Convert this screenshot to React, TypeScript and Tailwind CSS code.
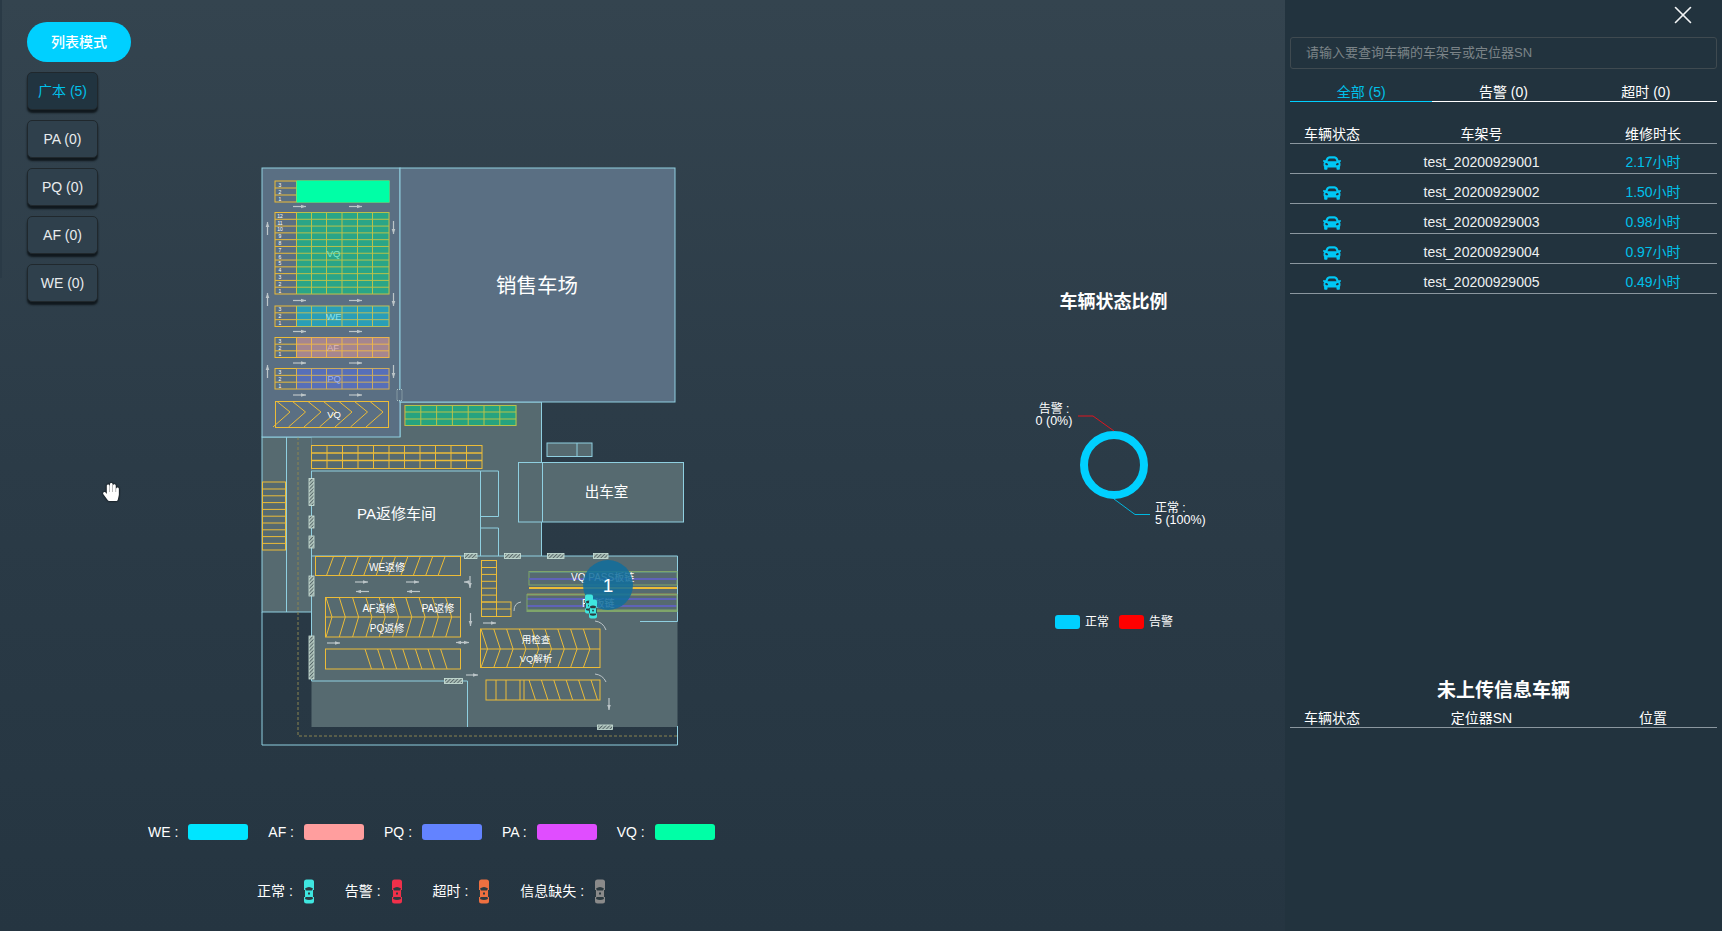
import { X } from "lucide-react";
import { FaCar, FaHandPaper } from "react-icons/fa";

const YELLOW = "#ecbc38";
const LINE = "#8fcfe0";
const GROUND = "#566a70";
const LOT = "#5a6f83";

const modeButtons = [
    { label: "广本 (5)", active: true },
    { label: "PA (0)" },
    { label: "PQ (0)" },
    { label: "AF (0)" },
    { label: "WE (0)" },
];

const vehicles = [
    { sn: "test_20200929001", hours: "2.17小时" },
    { sn: "test_20200929002", hours: "1.50小时" },
    { sn: "test_20200929003", hours: "0.98小时" },
    { sn: "test_20200929004", hours: "0.97小时" },
    { sn: "test_20200929005", hours: "0.49小时" },
];

const typeLegend = [
    { label: "WE :", color: "bg-[#00e5ff]" },
    { label: "AF :", color: "bg-[#ff9e9e]" },
    { label: "PQ :", color: "bg-[#6383ff]" },
    { label: "PA :", color: "bg-[#e04dff]" },
    { label: "VQ :", color: "bg-[#00ffa6]" },
];

const carLegend = [
    { label: "正常 :", color: "#3fe6e0" },
    { label: "告警 :", color: "#f0304a" },
    { label: "超时 :", color: "#ee7040" },
    { label: "信息缺失 :", color: "#8a8a8a" },
];

function CarTop({ color, x, y, w = 12, h = 25 }: { color: string; x?: number; y?: number; w?: number; h?: number }) {
    return (
        <svg x={x} y={y} width={w} height={h} viewBox="0 0 12 25">
            <rect x="1" y="0.5" width="10" height="24" rx="2.5" fill={color} />
            <path d="M2 9.5 Q6 6.5 10 9.5 L9 11.5 H3 Z" fill="#2c3a40" />
            <path d="M2.5 18 H9.5 L10 20 Q6 22 2 20 Z" fill="#2c3a40" />
            <rect x="1" y="11" width="1" height="7" fill="#2c3a40" />
            <rect x="10" y="11" width="1" height="7" fill="#2c3a40" />
            <rect x="5" y="13.5" width="2" height="2" fill="#2c3a40" />
        </svg>
    );
}

function Grid({ x, y, w, h, rows, cols, overlay, opaque }: { x: number; y: number; w: number; h: number; rows: number; cols?: number[]; overlay?: string; opaque?: boolean }) {
    const rowH = h / rows;
    const head = 21.5;
    const labels = Array.from({ length: rows }, (_, i) => rows - i);
    return (
        <g>
            {overlay && !opaque && <rect x={x + head} y={y} width={w - head} height={h} fill={overlay} opacity="0.4" />}
            <rect x={x} y={y} width={w} height={h} fill="none" stroke={YELLOW} strokeWidth="1" />
            {labels.map((n, i) => (
                <g key={n}>
                    {i > 0 && <line x1={x} x2={x + w} y1={y + i * rowH} y2={y + i * rowH} stroke={YELLOW} strokeWidth="1" />}
                    <text x={x + 5} y={y + i * rowH + rowH / 2 + 2} fill="#fff" fontSize="5" textAnchor="middle">{n}</text>
                </g>
            ))}
            <line x1={x + head} x2={x + head} y1={y} y2={y + h} stroke={YELLOW} strokeWidth="1" />
            {cols?.map((c) => <line key={c} x1={c} x2={c} y1={y} y2={y + h} stroke={YELLOW} strokeWidth="1" />)}
            {overlay && <rect x={x + head} y={y - 0.5} width={w - head + 0.5} height={h + 1} fill={overlay} opacity={opaque ? 1 : 0.22} />}
        </g>
    );
}

function Arrow({ x1, y1, x2, y2 }: { x1: number; y1: number; x2: number; y2: number }) {
    const horizontal = y1 === y2;
    const dir = horizontal ? Math.sign(x2 - x1) : Math.sign(y2 - y1);
    const head = horizontal
        ? `${x2},${y2} ${x2 - 5 * dir},${y2 - 1.8} ${x2 - 5 * dir},${y2 + 1.8}`
        : `${x2},${y2} ${x2 - 1.8},${y2 - 5 * dir} ${x2 + 1.8},${y2 - 5 * dir}`;
    return (
        <g>
            <line x1={x1} y1={y1} x2={x2} y2={y2} stroke="#bcc5c8" strokeWidth="1.2" />
            <polygon points={head} fill="#bcc5c8" />
        </g>
    );
}

function Hatch({ x, y, w, h }: { x: number; y: number; w: number; h: number }) {
    return <rect x={x} y={y} width={w} height={h} fill="url(#hatch)" stroke="#cfe6dc" strokeWidth="0.8" />;
}

function range(from: number, to: number, step: number) {
    const out: number[] = [];
    for (let v = from; v <= to; v += step) out.push(v);
    return out;
}

function ParkingMap() {
    const cols = [311.5, 326.5, 342, 357.5, 372.5];
    const arrowRows = [206.5, 300.5, 331.5, 363, 395];
    return (
        <svg width="450" height="600" viewBox="250 160 450 600" className="block">
            <defs>
                <pattern id="hatch" width="2.6" height="2.6" patternUnits="userSpaceOnUse" patternTransform="rotate(45)">
                    <rect width="2.6" height="2.6" fill="#a9bdb6" />
                    <line x1="0" y1="0" x2="0" y2="2.6" stroke="#26343c" strokeWidth="1.1" />
                </pattern>
            </defs>

            {/* ground */}
            <rect x="400" y="402" width="141.5" height="160" fill={GROUND} stroke={LINE} strokeWidth="1" />
            <rect x="262" y="437" width="50" height="175" fill={GROUND} stroke={LINE} strokeWidth="1" />
            <rect x="311.5" y="437" width="200" height="120" fill={GROUND} />
            <rect x="311.5" y="556" width="366" height="171" fill={GROUND} />
            <line x1="286.5" x2="286.5" y1="437" y2="612" stroke={LINE} strokeWidth="1" />
            <path d="M298 437 V736 H677" fill="none" stroke="#8a8450" strokeWidth="1" strokeDasharray="3 2" />
            <path d="M262 612 V745 H677.5 V726" fill="none" stroke={LINE} strokeWidth="1" />
            <path d="M311.5 471 V681 H467.5 V727" fill="none" stroke={LINE} strokeWidth="1" />
            <path d="M311.5 556 H677.5 V621.5 H640" fill="none" stroke={LINE} strokeWidth="1" />

            {/* sales lot and left block */}
            <rect x="262" y="168" width="138" height="269" fill={LOT} stroke={LINE} strokeWidth="1" />
            <rect x="400" y="168" width="275" height="234" fill={LOT} stroke={LINE} strokeWidth="1" />
            <text x="537" y="293" fill="#fff" fontSize="20.5" textAnchor="middle">销售车场</text>

            <Grid x={275} y={181} w={114} h={21} rows={3} overlay="#00ffa6" opaque />
            <Grid x={275} y={212.5} w={114} h={81.5} rows={12} cols={cols} overlay="#00d88c" />
            <Grid x={275} y={306} w={114} h={20.5} rows={3} cols={cols} overlay="#00c8e6" />
            <Grid x={275} y={337.5} w={114} h={20} rows={3} cols={cols} overlay="#e89a9a" />
            <Grid x={275} y={368.5} w={114} h={20.5} rows={3} cols={cols} overlay="#5570e8" />
            <text x="333.5" y="257" fill="#7fe8c8" fontSize="9.5" textAnchor="middle">VQ</text>
            <text x="334" y="319.5" fill="#8be4ee" fontSize="9.5" textAnchor="middle">WE</text>
            <text x="333" y="351" fill="#dcb8bc" fontSize="9.5" textAnchor="middle">AF</text>
            <text x="334" y="382" fill="#9cb0ee" fontSize="9.5" textAnchor="middle">PQ</text>

            <rect x="275.5" y="401.5" width="113" height="26" fill="none" stroke={YELLOW} strokeWidth="1" />
            {range(277, 375, 15.5).map((x) => (
                <path key={x} d={`M${x} 401.5 L${x + 13} 412 L${x - 4} 427`} fill="none" stroke={YELLOW} strokeWidth="1" />
            ))}
            <text x="334" y="418" fill="#fff" fontSize="9.5" textAnchor="middle">VQ</text>

            {arrowRows.map((y) => (
                <g key={y}>
                    <Arrow x1={293} y1={y} x2={306} y2={y} />
                    <Arrow x1={349} y1={y} x2={362} y2={y} />
                </g>
            ))}
            <Arrow x1={267.5} y1={235} x2={267.5} y2={222} />
            <Arrow x1={267.5} y1={306} x2={267.5} y2={293} />
            <Arrow x1={267.5} y1={378} x2={267.5} y2={365} />
            <Arrow x1={393.5} y1={221} x2={393.5} y2={234} />
            <Arrow x1={393.5} y1={293} x2={393.5} y2={306} />
            <Arrow x1={393.5} y1={365} x2={393.5} y2={378} />
            <rect x="397" y="389.5" width="5" height="11" fill="#5a6f83" stroke="#cfe6dc" strokeWidth="0.7" strokeDasharray="1 1" />

            {/* green bay below the lot */}
            <rect x="405" y="405" width="111.5" height="21" fill="#00d88c" opacity="0.4" />
            <rect x="405" y="405.5" width="111" height="20" fill="none" stroke={YELLOW} strokeWidth="1" />
            {range(420.8, 505, 15.8).map((x) => <line key={x} x1={x} x2={x} y1="405.5" y2="425.5" stroke={YELLOW} strokeWidth="1" />)}
            <line x1="405" x2="516" y1="412" y2="412" stroke={YELLOW} strokeWidth="1" />
            <line x1="405" x2="516" y1="419" y2="419" stroke={YELLOW} strokeWidth="1" />
            <rect x="405" y="405" width="111.5" height="21" fill="#00d88c" opacity="0.22" />

            {/* yellow rows above workshop */}
            <rect x="311.5" y="445.5" width="170.5" height="23" fill="none" stroke={YELLOW} strokeWidth="1" />
            {range(327, 475, 15.5).map((x) => <line key={x} x1={x} x2={x} y1="445.5" y2="468.5" stroke={YELLOW} strokeWidth="1" />)}
            <line x1="311.5" x2="482" y1="453" y2="453" stroke={YELLOW} strokeWidth="1.5" />
            <line x1="311.5" x2="482" y1="460.5" y2="460.5" stroke={YELLOW} strokeWidth="1.5" />

            <rect x="262.5" y="482" width="23" height="68" fill="none" stroke={YELLOW} strokeWidth="1" />
            {range(489, 544, 6.8).map((y) => <line key={y} x1="262.5" x2="285.5" y1={y} y2={y} stroke={YELLOW} strokeWidth="1" />)}

            {/* workshop and rooms */}
            <path d="M311.5 471 H480.5 V556" fill="none" stroke={LINE} strokeWidth="1" />
            <path d="M480.5 471 H498.5 V516.5 H480.5 M480.5 528 H498.5 V556" fill="none" stroke={LINE} strokeWidth="1" />
            <text x="396.5" y="519" fill="#fff" fontSize="15" textAnchor="middle">PA返修车间</text>

            <rect x="518.5" y="462.5" width="165" height="59.5" fill={GROUND} stroke={LINE} strokeWidth="1" />
            <line x1="542.5" x2="542.5" y1="462.5" y2="522" stroke={LINE} strokeWidth="1" />
            <text x="606.5" y="497" fill="#fff" fontSize="14.5" textAnchor="middle">出车室</text>
            <rect x="547" y="443" width="45" height="13.5" fill={GROUND} stroke={LINE} strokeWidth="1" />
            <line x1="577" x2="577" y1="443" y2="456.5" stroke={LINE} strokeWidth="1" />

            {/* WE bay */}
            <rect x="315.5" y="556.5" width="145" height="19" fill="none" stroke={YELLOW} strokeWidth="1" />
            {range(326.5, 450, 12.4).map((x) => <line key={x} x1={x} y1="575.5" x2={x + 7} y2="556.5" stroke={YELLOW} strokeWidth="1" />)}
            <text x="387" y="570.5" fill="#fff" fontSize="10" textAnchor="middle">WE返修</text>

            {/* AF PA PQ bay */}
            <rect x="325.5" y="597.5" width="135" height="39.5" fill="none" stroke={YELLOW} strokeWidth="1" />
            <line x1="325.5" x2="460.5" y1="617" y2="617" stroke={YELLOW} strokeWidth="1" />
            {range(326, 455, 13.3).map((x) => (
                <path key={x} d={`M${x} 597.5 L${x + 6} 617 L${x} 637`} fill="none" stroke={YELLOW} strokeWidth="1" />
            ))}
            <text x="379" y="612" fill="#fff" fontSize="10" textAnchor="middle">AF返修</text>
            <text x="438" y="612" fill="#fff" fontSize="10" textAnchor="middle">PA返修</text>
            <text x="387" y="632" fill="#fff" fontSize="10" textAnchor="middle">PQ返修</text>

            <rect x="325.5" y="649" width="135" height="20" fill="none" stroke={YELLOW} strokeWidth="1" />
            {range(365, 452, 12.6).map((x) => <line key={x} x1={x} y1="649" x2={x + 6.5} y2="669" stroke={YELLOW} strokeWidth="1" />)}

            {/* column bay */}
            <rect x="481.5" y="560.5" width="15" height="56" fill="none" stroke={YELLOW} strokeWidth="1" />
            {range(567.5, 602, 6.9).map((y) => <line key={y} x1="481.5" x2="496.5" y1={y} y2={y} stroke={YELLOW} strokeWidth="1" />)}
            <rect x="481.5" y="602" width="29.5" height="14.5" fill="none" stroke={YELLOW} strokeWidth="1" />
            <line x1="496.5" x2="496.5" y1="602" y2="616.5" stroke={YELLOW} strokeWidth="1" />
            <line x1="481.5" x2="511" y1="609" y2="609" stroke={YELLOW} strokeWidth="1" />

            {/* inspection bay */}
            <rect x="480.5" y="629" width="119.5" height="38.5" fill="none" stroke={YELLOW} strokeWidth="1" />
            <line x1="480.5" x2="600" y1="649" y2="649" stroke={YELLOW} strokeWidth="1" />
            {range(481, 595, 12.8).map((x) => (
                <path key={x} d={`M${x} 629 L${x + 6.5} 649 L${x} 667.5`} fill="none" stroke={YELLOW} strokeWidth="1" />
            ))}
            <text x="536" y="643" fill="#fff" fontSize="9.5" textAnchor="middle">用检查</text>
            <text x="536" y="662" fill="#fff" fontSize="9.5" textAnchor="middle">VQ解析</text>

            <rect x="486" y="680" width="114" height="20" fill="none" stroke={YELLOW} strokeWidth="1" />
            {[496, 506, 520, 524].map((x) => <line key={x} x1={x} x2={x} y1="680" y2="700" stroke={YELLOW} strokeWidth="1" />)}
            {range(529, 592, 12.4).map((x) => <line key={x} x1={x} y1="680" x2={x + 6.5} y2="700" stroke={YELLOW} strokeWidth="1" />)}

            {/* PASS lanes */}
            <rect x="529" y="571.5" width="148" height="13.5" fill="none" stroke="#7fa56a" strokeWidth="1" />
            <line x1="529" x2="677" y1="579" y2="579" stroke="#5f63b8" strokeWidth="2" />
            <line x1="529" x2="677" y1="572.5" y2="572.5" stroke="#5f8a80" strokeWidth="1" />
            <line x1="529" x2="677" y1="588" y2="588" stroke={YELLOW} strokeWidth="2" />
            <line x1="527" x2="677" y1="594.5" y2="594.5" stroke={YELLOW} strokeWidth="1.5" />
            <line x1="527" x2="677" y1="599" y2="599" stroke="#5f63b8" strokeWidth="2" />
            <line x1="527" x2="677" y1="606" y2="606" stroke="#5f63b8" strokeWidth="2" />
            <rect x="527" y="594.5" width="150" height="17" fill="none" stroke="#7fa56a" strokeWidth="1" />
            <line x1="527" x2="677" y1="610.5" y2="610.5" stroke="#7fa56a" strokeWidth="2" />
            <text x="571" y="581" fill="#fff" fontSize="10">VQ PASS板链</text>
            <text x="582" y="607" fill="#fff" fontSize="10">PA板链</text>

            {/* floor arrows */}
            <Arrow x1={355} y1={582} x2={368} y2={582} />
            <Arrow x1={406} y1={582} x2={419} y2={582} />
            <Arrow x1={369} y1={591.5} x2={356} y2={591.5} />
            <Arrow x1={420} y1={591.5} x2={407} y2={591.5} />
            <Arrow x1={470} y1={582} x2={464} y2={582} />
            <Arrow x1={470} y1={576} x2={470} y2={588} />
            <Arrow x1={470.5} y1={613} x2={470.5} y2={626} />
            <Arrow x1={483} y1={623} x2={496} y2={623} />
            <Arrow x1={327} y1={643} x2={340} y2={643} />
            <Arrow x1={468} y1={642.5} x2={456} y2={642.5} />
            <Arrow x1={458} y1={642.5} x2={469} y2={642.5} />
            <Arrow x1={466} y1={675} x2={478} y2={675} />
            <Arrow x1={609} y1={698} x2={609} y2={710} />
            <path d="M521 602 Q514 603 514 611" fill="none" stroke="#bcc5c8" strokeWidth="1" />
            <path d="M595 621 Q603 622 606 630" fill="none" stroke="#bcc5c8" strokeWidth="1" />
            <path d="M595 674 Q603 675 606 682" fill="none" stroke="#bcc5c8" strokeWidth="1" />

            {/* hatched gates */}
            <Hatch x={464.5} y={553.5} w={12.5} h={5} />
            <Hatch x={504.5} y={553.5} w={16} h={5} />
            <Hatch x={547.5} y={553.5} w={16.5} h={5} />
            <Hatch x={593.5} y={553.5} w={14.5} h={5} />
            <Hatch x={444.5} y={678.5} w={18} h={5} />
            <Hatch x={597.5} y={725} w={15} h={4.5} />
            <Hatch x={309} y={478.5} w={5} h={27} />
            <Hatch x={309} y={516} w={5} h={12} />
            <Hatch x={309} y={536} w={5} h={12} />
            <Hatch x={309} y={576} w={5} h={20} />
            <Hatch x={309} y={636} w={5} h={43} />

            {/* cluster marker */}
            <circle cx="608" cy="585" r="25" fill="#0f6d9c" opacity="0.85" />
            <text x="608" y="592" fill="#fff" fontSize="19" textAnchor="middle">1</text>
            <CarTop color="#3fe6e0" x={584} y={594} w={10} h={20} />
            <CarTop color="#3fe6e0" x={588} y={599} w={10} h={20} />
        </svg>
    );
}

function StatusChart() {
    return (
        <svg width="285" height="160" viewBox="1000 395 285 160" className="block mt-[81px]">
            <circle cx="1114" cy="465" r="30" fill="none" stroke="#00d0ff" strokeWidth="8" />
            <path d="M1114 431 L1093 416 H1078" fill="none" stroke="#e0141e" strokeWidth="1" />
            <path d="M1114 499 L1135 514.5 H1150" fill="none" stroke="#00b8e0" strokeWidth="1" />
            <text x="1054" y="413" fill="#fff" fontSize="12" textAnchor="middle">告警 :</text>
            <text x="1054" y="425" fill="#fff" fontSize="12.5" textAnchor="middle">0 (0%)</text>
            <text x="1155" y="512" fill="#fff" fontSize="12">正常 :</text>
            <text x="1155" y="524" fill="#fff" fontSize="12.5">5 (100%)</text>
        </svg>
    );
}

export default function App() {
    return (
        <div className="relative flex w-[1722px] h-[931px] overflow-hidden bg-gradient-to-b from-[#34444f] via-[#2b3b47] to-[#253541] text-white font-['Liberation_Sans','Noto_Sans_CJK_SC',sans-serif]">
            {/* Mode buttons */}
            <div className="w-[148px] shrink-0 pl-[27px] pt-[22px] flex flex-col gap-[10px]">
                <button className="w-[104px] h-[40px] rounded-full bg-[#00d0ff] text-[14px] font-medium">列表模式</button>
                {modeButtons.map((b) => (
                    <button
                        key={b.label}
                        className={`w-[71px] h-[38px] rounded-[5px] border border-[#20282d] shadow-[0_3px_2px_#10181d] text-[14px] ${b.active ? "bg-[#213440] text-[#00c0ea]" : "bg-[#2f404c] text-[#e8ecee]"}`}
                    >
                        {b.label}
                    </button>
                ))}
            </div>

            {/* Map and legends */}
            <div className="w-[852px] shrink-0 pt-[160px]">
                <div className="ml-[102px]">
                    <ParkingMap />
                </div>
                <div className="mt-[64px] flex items-center gap-[20px] h-[16px]">
                    {typeLegend.map((t) => (
                        <div key={t.label} className="flex items-center gap-[10px]">
                            <span className="text-[14px] whitespace-nowrap">{t.label}</span>
                            <span className={`w-[60px] h-[16px] rounded-[3px] ${t.color}`} />
                        </div>
                    ))}
                </div>
                <div className="mt-[39px] ml-[109px] flex items-center gap-[30px] h-[25px]">
                    {carLegend.map((c) => (
                        <div key={c.label} className="flex items-center gap-[10px]">
                            <span className="text-[14px] whitespace-nowrap">{c.label}</span>
                            <CarTop color={c.color} />
                        </div>
                    ))}
                </div>
            </div>

            {/* Status chart */}
            <div className="w-[285px] shrink-0 pt-[290px]">
                <h2 className="w-[227px] text-center text-[18px] leading-[24px] font-bold">车辆状态比例</h2>
                <StatusChart />
                <div className="mt-[60px] pl-[55px] flex items-center h-[14px] text-[12px]">
                    <span className="w-[25px] h-[14px] rounded-[3px] bg-[#00d0ff]" />
                    <span className="ml-[5px] w-[34px]">正常</span>
                    <span className="w-[25px] h-[14px] rounded-[3px] bg-[#ff0000]" />
                    <span className="ml-[5px]">告警</span>
                </div>
            </div>

            {/* Vehicle panel */}
            <aside className="w-[437px] shrink-0 h-full bg-[#22333e] px-[5px]">
                <div className="h-[37px] flex justify-end items-start pr-[19px]">
                    <X size={30} strokeWidth={1.3} color="#f2f4f5" />
                </div>
                <div className="h-[32px] flex items-center pl-[15px] rounded-[3px] border border-[#3f4a50] text-[13px] text-[#7c8488]">
                    请输入要查询车辆的车架号或定位器SN
                </div>

                <div className="mt-[14px] grid grid-cols-3 text-[14px] text-center">
                    <div className="h-[19px] leading-[18px] border-b border-[#00d0ff] text-[#00c0ea]">全部 (5)</div>
                    <div className="h-[19px] leading-[18px] border-b border-white">告警 (0)</div>
                    <div className="h-[19px] leading-[18px] border-b border-white">超时 (0)</div>
                </div>

                <div className="mt-[22px] h-[20px] grid grid-cols-[84px_215px_128px] text-[14px] text-center leading-[20px] border-b border-[#8b979f]">
                    <span>车辆状态</span>
                    <span>车架号</span>
                    <span>维修时长</span>
                </div>
                {vehicles.map((v) => (
                    <div key={v.sn} className="h-[30px] grid grid-cols-[84px_215px_128px] items-center text-[14px] text-center pt-[8px] border-b border-[#8b979f]">
                        <span className="flex justify-center"><FaCar size={18} color="#00c8f5" /></span>
                        <span className="text-[#eef1f2]">{v.sn}</span>
                        <span className="text-[#00c0ea]">{v.hours}</span>
                    </div>
                ))}

                <h2 className="mt-[385px] h-[24px] text-center text-[19px] leading-[24px] font-bold">未上传信息车辆</h2>
                <div className="mt-[6px] h-[19px] grid grid-cols-[84px_215px_128px] text-[14px] text-center leading-[18px] border-b border-[#8b979f]">
                    <span>车辆状态</span>
                    <span>定位器SN</span>
                    <span>位置</span>
                </div>
            </aside>

            {/* Pointer and left edge */}
            <div className="absolute left-0 top-0 w-[2px] h-[278px] bg-[#2a3a46]" />
            <FaHandPaper size={18} color="#fff" className="absolute left-[102px] top-[483px] drop-shadow-[0_0_1px_#000]" />
        </div>
    );
}
